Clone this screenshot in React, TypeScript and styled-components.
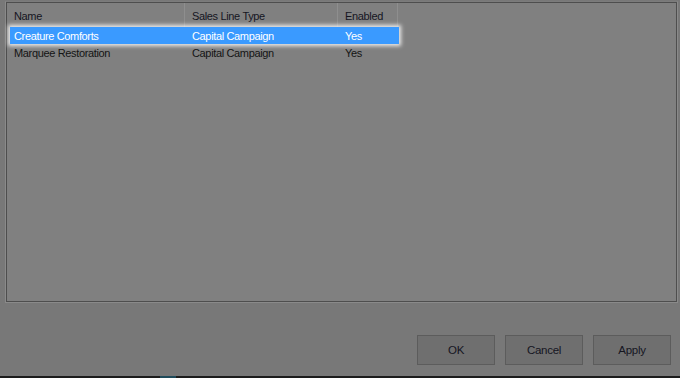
import React from 'react';
import styled, { createGlobalStyle } from 'styled-components';

const GlobalStyle = createGlobalStyle`
  html, body {
    margin: 0;
    padding: 0;
    background: #787878;
  }
  body {
    font-family: 'Liberation Sans', Arial, sans-serif;
    font-size: 11px;
    letter-spacing: -0.35px;
    color: #141414;
  }
`;

interface Row {
  name: string;
  type: string;
  enabled: string;
}

const rows: Row[] = [
  { name: 'Creature Comforts', type: 'Capital Campaign', enabled: 'Yes' },
  { name: 'Marquee Restoration', type: 'Capital Campaign', enabled: 'Yes' },
];

const Dialog = styled.div`
  width: 680px;
  height: 378px;
  display: flex;
  flex-direction: column;
  background: #787878;
  overflow: hidden;
`;

const ListFrame = styled.div`
  margin: 1px 2px 0 5px;
  height: 302px;
  border: 1px solid #8a8a8a;
  border-top-color: #7c7c7c;
  box-sizing: border-box;
  display: flex;
`;

const ListBox = styled.div`
  flex: 1;
  border: 1px solid #4e4e4e;
  background: #808080;
  padding-left: 1px;
  display: flex;
  flex-direction: column;
`;

const HeaderRow = styled.div`
  display: flex;
  height: 24px;
  align-items: stretch;
`;

const HeaderCell = styled.div<{ $w: number; $pad: number }>`
  width: ${(p) => p.$w}px;
  padding-left: ${(p) => p.$pad}px;
  box-sizing: border-box;
  display: flex;
  align-items: center;
  padding-top: 1px;
  border-right: 1px solid #8e8e8e;
  color: #15151f;
`;

const Body = styled.div`
  display: flex;
  flex-direction: column;
`;

const DataRow = styled.div<{ $selected?: boolean }>`
  display: flex;
  height: 17px;
  align-items: center;
  width: 389px;
  margin-left: 2px;
  background: ${(p) => (p.$selected ? '#3a9aff' : 'transparent')};
  color: ${(p) => (p.$selected ? '#ffffff' : '#141414')};
  box-shadow: ${(p) =>
    p.$selected ? '0 0 4px 2px rgba(255, 255, 255, 0.85)' : 'none'};
  position: relative;
`;

const Cell = styled.div<{ $w: number; $pad: number }>`
  width: ${(p) => p.$w}px;
  padding-left: ${(p) => p.$pad}px;
  box-sizing: border-box;
  white-space: nowrap;
`;

const Footer = styled.div`
  flex: 1;
  display: flex;
  justify-content: flex-end;
  align-items: flex-start;
  gap: 10px;
  padding: 32px 9px 0 0;
`;

const Button = styled.button`
  width: 78px;
  height: 30px;
  background: #6f6f6f;
  border: 1px solid #5c5c5c;
  font-family: 'Liberation Sans', Arial, sans-serif;
  font-size: 11.5px;
  letter-spacing: -0.3px;
  color: #15151f;
  padding: 0;
`;

const Taskbar = styled.div`
  height: 2px;
  background: #1c1c1c;
  display: flex;
  padding-left: 160px;
`;

const TaskItem = styled.div`
  width: 16px;
  height: 2px;
  background: #1f4a5a;
`;

const columns = [
  { label: 'Name', w: 177, pad: 6 },
  { label: 'Sales Line Type', w: 153, pad: 7 },
  { label: 'Enabled', w: 60, pad: 7 },
];

const App = () => {
  return (
    <>
      <GlobalStyle />
      <Dialog>
        <ListFrame>
          <ListBox>
            <HeaderRow>
              {columns.map((c) => (
                <HeaderCell key={c.label} $w={c.w} $pad={c.pad}>
                  {c.label}
                </HeaderCell>
              ))}
            </HeaderRow>
            <Body>
              {rows.map((r, i) => (
                <DataRow key={r.name} $selected={i === 0}>
                  <Cell $w={175} $pad={4}>{r.name}</Cell>
                  <Cell $w={153} $pad={7}>{r.type}</Cell>
                  <Cell $w={60} $pad={7}>{r.enabled}</Cell>
                </DataRow>
              ))}
            </Body>
          </ListBox>
        </ListFrame>
        <Footer>
          <Button>OK</Button>
          <Button>Cancel</Button>
          <Button>Apply</Button>
        </Footer>
        <Taskbar>
          <TaskItem />
        </Taskbar>
      </Dialog>
    </>
  );
};

export default App;
